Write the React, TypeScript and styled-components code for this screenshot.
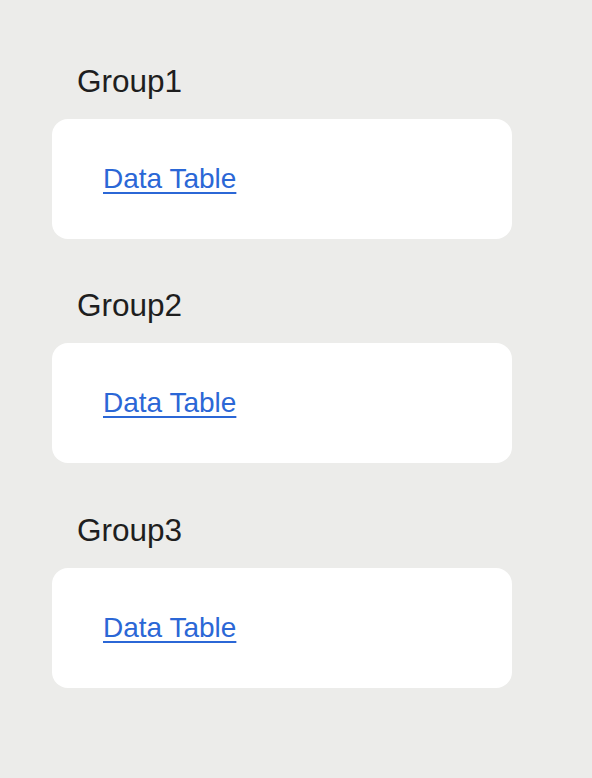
import { createGlobalStyle, styled } from "styled-components";

const GlobalStyle = createGlobalStyle`
  html, body {
    margin: 0;
    background: #ececea;
  }
  body {
    font-family: "Liberation Sans", Arial, sans-serif;
  }
`;

const groups = ["Group1", "Group2", "Group3"];

export default function App() {
  return (
    <>
      <GlobalStyle />
      <Page>
        {groups.map((name) => (
          <Section key={name}>
            <GroupTitle>{name}</GroupTitle>
            <Card>
              <TableLink href="#">Data Table</TableLink>
            </Card>
          </Section>
        ))}
      </Page>
    </>
  );
}

const Page = styled.main`
  display: flex;
  flex-direction: column;
  gap: 48.3px;
  padding: 63px 0 0 52px;
  width: 460px;
`;

const Section = styled.section`
  display: flex;
  flex-direction: column;
  gap: 20px;
`;

const GroupTitle = styled.h2`
  margin: 0 0 0 25px;
  font-size: 31.5px;
  line-height: 36px;
  font-weight: 400;
  color: #1e1e1e;
`;

const Card = styled.div`
  display: flex;
  align-items: center;
  height: 120px;
  padding: 0 51px;
  background: #ffffff;
  border-radius: 16px;
`;

const TableLink = styled.a`
  font-size: 28px;
  line-height: 32px;
  color: #2b67d6;
  text-decoration: underline;
  text-underline-offset: 4px;
  text-decoration-thickness: 2px;
`;
